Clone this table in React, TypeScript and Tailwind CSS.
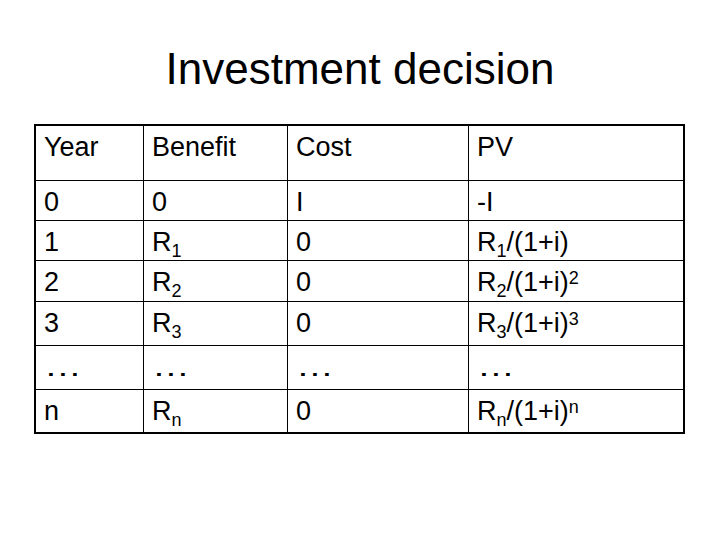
import React from "react";

const Sub = ({ children }: { children: React.ReactNode }) => (
  <sub className="text-[18px] bottom-[-6px]">{children}</sub>
);
const Sup = ({ children }: { children: React.ReactNode }) => (
  <sup className="text-[18px] top-[-7px]">{children}</sup>
);

const Dots = () => (
  <span className="inline-block origin-left scale-x-[1.4]">…</span>
);

type Row = { h: string; cells: React.ReactNode[] };

const rows: Row[] = [
  { h: "h-[54px]", cells: ["Year", "Benefit", "Cost", "PV"] },
  { h: "h-[39px]", cells: ["0", "0", "I", "-I"] },
  {
    h: "h-[39px]",
    cells: [
      "1",
      <>R<Sub>1</Sub></>,
      "0",
      <>R<Sub>1</Sub>/(1+i)</>,
    ],
  },
  {
    h: "h-[40px]",
    cells: [
      "2",
      <>R<Sub>2</Sub></>,
      "0",
      <>R<Sub>2</Sub>/(1+i)<Sup>2</Sup></>,
    ],
  },
  {
    h: "h-[43px]",
    cells: [
      "3",
      <>R<Sub>3</Sub></>,
      "0",
      <>R<Sub>3</Sub>/(1+i)<Sup>3</Sup></>,
    ],
  },
  { h: "h-[43px]", cells: [<Dots />, <Dots />, <Dots />, <Dots />] },
  {
    h: "h-[42px]",
    cells: [
      "n",
      <>R<Sub>n</Sub></>,
      "0",
      <>R<Sub>n</Sub>/(1+i)<Sup>n</Sup></>,
    ],
  },
];

export default function App() {
  return (
    <div
      className="w-[720px] h-[540px] bg-white text-black overflow-hidden"
      style={{ fontFamily: '"Liberation Sans", Arial, sans-serif' }}
    >
      <h1 className="pt-[47px] text-center text-[44px] leading-[44px] font-normal">
        Investment decision
      </h1>
      <div className="mt-[33px] ml-[34px] w-[651px] border-2 border-black bg-black grid grid-cols-[107px_143px_180px_214px] gap-px">
        {rows.map((r, ri) =>
          r.cells.map((c, ci) => (
            <div
              key={`${ri}-${ci}`}
              className={`${r.h} bg-white pl-[8px] pt-[6px] text-[27px] leading-[31px] whitespace-nowrap`}
            >
              {c}
            </div>
          ))
        )}
      </div>
    </div>
  );
}
